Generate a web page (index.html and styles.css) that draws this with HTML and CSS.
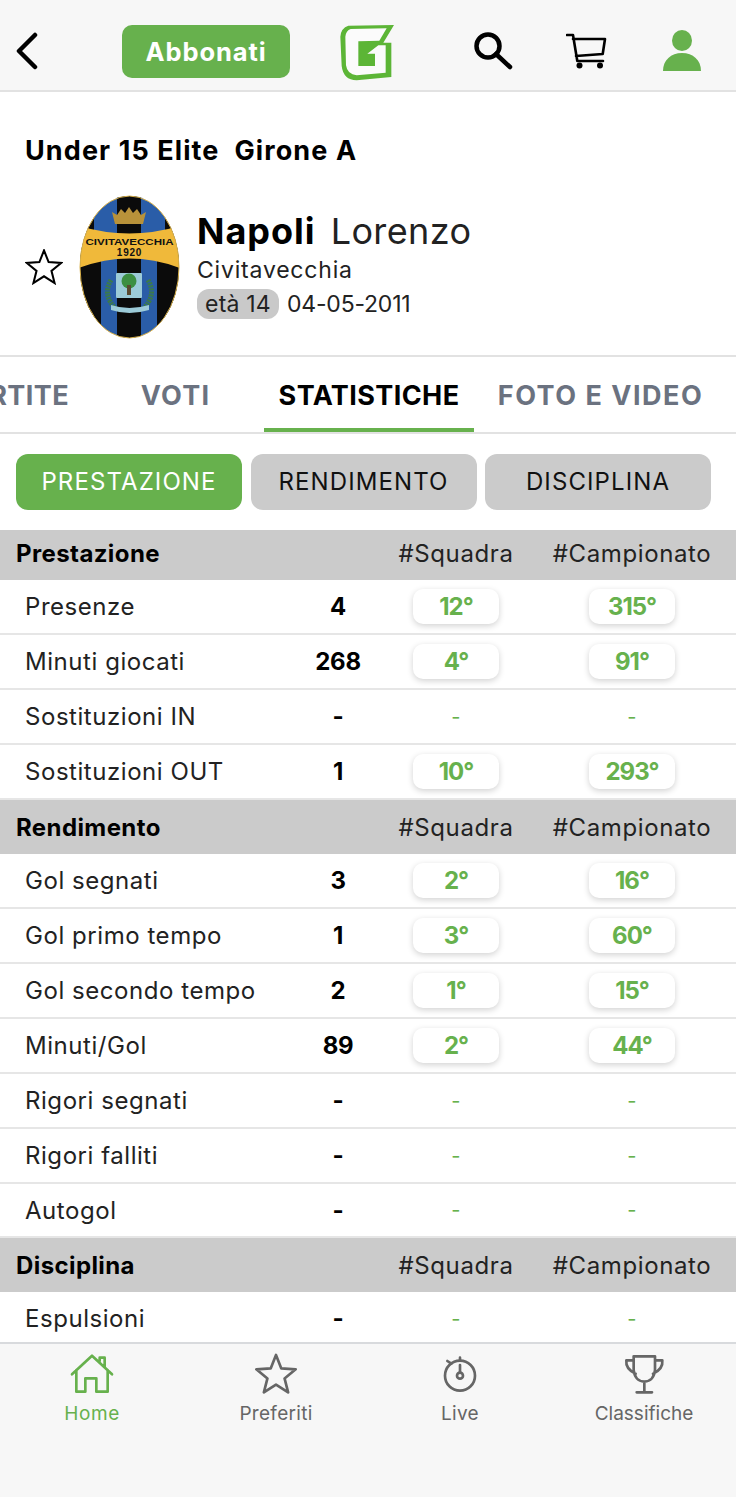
FILE: index.html
```html
<!DOCTYPE html>
<html lang="it">
<head>
<meta charset="utf-8">
<title>Napoli Lorenzo</title>
<link rel="stylesheet" href="styles.css">
</head>
<body>
<div class="app">
  <header class="topbar">
    <svg class="ic-back" viewBox="0 0 24 38"><path d="M20 3 L4 19 L20 35" /></svg>
    <a class="subscribe">Abbonati</a>
    <svg class="ic-logo" viewBox="0 0 225 210">
      <path class="logo-g" d="M55 29 L192 27 L160 80 L184 80 L184 183 L80 193 Q40 192 35 150 L31 62 Q33 36 55 29Z"/>
      <path class="logo-w" d="M62 39 L170 37 L148 74 L85 76 L85 150 L135 150 L135 113 L112 113 L145 88 L167 88 L167 170 L80 178 Q52 176 48 148 L46 62 Q48 44 62 39Z"/>
    </svg>
    <svg class="ic-search" viewBox="0 0 42 42"><circle cx="16" cy="16" r="11.500"/><path d="M24 24 L38 37"/></svg>
    <svg class="ic-cart" viewBox="106 12 41 36"><path d="M107 14 H113 L117.300 40 H143 M113 18 H145 L142.700 33 L116 35"/><circle cx="119.500" cy="44.500" r="3"/><circle cx="140" cy="44.500" r="3"/></svg>
    <svg class="ic-user" viewBox="0 0 40 42"><ellipse cx="20" cy="10.500" rx="10" ry="10.500"/><path d="M1 41 C1 30 9 23 20 23 C31 23 39 30 39 41Z"/></svg>
  </header>

  <main class="content">
    <h1 class="league"><span>Under 15 Elite</span><span>Girone A</span></h1>

    <section class="player">
      <svg class="ic-fav" viewBox="25 10 130 124"><path d="M90 15 L105.900 55.200 L149 58 L115.700 85.300 L126.400 127.200 L90 104 L53.600 127.200 L64.300 85.300 L31 58 L74.100 55.200Z"/></svg>
      <svg class="crest" viewBox="0 0 101 144">
        <defs><clipPath id="oval"><ellipse cx="50.500" cy="72" rx="49.500" ry="71"/></clipPath></defs>
        <g clip-path="url(#oval)">
          <rect class="c-blue" width="101" height="144"/>
          <rect class="c-black" x="38" width="24" height="144"/>
          <rect class="c-black" x="0" y="18" width="15" height="126"/>
          <rect class="c-black" x="86" y="18" width="15" height="126"/>
          <rect class="c-black" x="0" y="60" width="22" height="84"/>
          <rect class="c-black" x="78" y="60" width="23" height="84"/>
          <path class="c-yellow" d="M0 31 Q50 46 101 31 V73 Q50 54 0 73Z"/>
          <path class="c-gold" d="M33 17 L38 20 L42 14 L46 18 L50 12 L54 18 L58 14 L62 20 L67 17 L64 29 H36Z"/>
          <path class="c-leaf" d="M32 85 Q23 100 37 114 M69 85 Q78 100 64 114"/>
          <rect class="c-sky" x="37" y="78" width="26" height="25" rx="1"/>
          <circle class="c-tree" cx="50" cy="86" r="7.500"/>
          <rect class="c-trunk" x="48" y="90" width="4" height="10"/>
          <path class="c-sky" d="M32 110 Q50 116 70 110 L70 115 Q50 121 32 115Z"/>
          <text class="c-name" x="50.500" y="50" text-anchor="middle" textLength="88" lengthAdjust="spacingAndGlyphs">CIVITAVECCHIA</text>
          <text class="c-year" x="50.500" y="60.500" text-anchor="middle">1920</text>
        </g>
        <ellipse class="c-rim" cx="50.500" cy="72" rx="49.500" ry="71"/>
      </svg>
      <div class="player-info">
        <div class="player-name"><strong>Napoli</strong><span>Lorenzo</span></div>
        <div class="player-club">Civitavecchia</div>
        <div class="player-age"><span class="age-pill">età 14</span><span class="birth">04-05-2011</span></div>
      </div>
    </section>

    <nav class="tabs">
      <a class="tab tab-first">PARTITE</a>
      <a class="tab tab-voti">VOTI</a>
      <a class="tab tab-stat active">STATISTICHE</a>
      <a class="tab tab-foto">FOTO E VIDEO</a>
    </nav>

    <div class="segments">
      <a class="segment on">PRESTAZIONE</a>
      <a class="segment">RENDIMENTO</a>
      <a class="segment">DISCIPLINA</a>
    </div>

    <div class="stats">
      <div class="row head short"><b>Prestazione</b><i></i><span>#Squadra</span><span>#Campionato</span></div>
      <div class="row"><span>Presenze</span><b>4</b><em>12°</em><em>315°</em></div>
      <div class="row"><span>Minuti giocati</span><b>268</b><em>4°</em><em>91°</em></div>
      <div class="row"><span>Sostituzioni IN</span><b>-</b><u>-</u><u>-</u></div>
      <div class="row"><span>Sostituzioni OUT</span><b>1</b><em>10°</em><em>293°</em></div>
      <div class="row head"><b>Rendimento</b><i></i><span>#Squadra</span><span>#Campionato</span></div>
      <div class="row"><span>Gol segnati</span><b>3</b><em>2°</em><em>16°</em></div>
      <div class="row"><span>Gol primo tempo</span><b>1</b><em>3°</em><em>60°</em></div>
      <div class="row"><span>Gol secondo tempo</span><b>2</b><em>1°</em><em>15°</em></div>
      <div class="row"><span>Minuti/Gol</span><b>89</b><em>2°</em><em>44°</em></div>
      <div class="row"><span>Rigori segnati</span><b>-</b><u>-</u><u>-</u></div>
      <div class="row"><span>Rigori falliti</span><b>-</b><u>-</u><u>-</u></div>
      <div class="row tight"><span>Autogol</span><b>-</b><u>-</u><u>-</u></div>
      <div class="row head"><b>Disciplina</b><i></i><span>#Squadra</span><span>#Campionato</span></div>
      <div class="row last"><span>Espulsioni</span><b>-</b><u>-</u><u>-</u></div>
    </div>
  </main>

  <footer class="tabbar">
    <a class="nav current">
      <svg class="nav-ic" viewBox="5 15 180 132"><path d="M35 88 L95 32 L155 88 M48 75 V140 H75 V100 H108 V140 H142 V75 M118 48 V38 H133 V65"/></svg>
      <span>Home</span>
    </a>
    <a class="nav">
      <svg class="nav-ic" viewBox="0 0 180 132"><path d="M90 15 L105.900 55.200 L149 58 L115.700 85.300 L126.400 127.200 L90 104 L53.600 127.200 L64.300 85.300 L31 58 L74.100 55.200Z"/></svg>
      <span>Preferiti</span>
    </a>
    <a class="nav">
      <svg class="nav-ic" viewBox="-2 15 180 132"><circle cx="88" cy="92" r="45"/><circle cx="88" cy="92" r="9"/><path d="M88 60 V83 M88 47 V38 M62 56 L50 48"/></svg>
      <span>Live</span>
    </a>
    <a class="nav nav-long">
      <svg class="nav-ic" viewBox="552 15 180 132"><path d="M611 34 H675 V75 Q672 108 643 110 Q614 108 611 75Z M611 46 H589 Q586 72 617 86 M675 46 H697 Q700 72 669 86 M643 110 V141 M620 142 H666"/></svg>
      <span>Classifiche</span>
    </a>
  </footer>
</div>
</body>
</html>
```
FILE: styles.css
```css
* { box-sizing: border-box; }
html, body { margin: 0; padding: 0; background: #fff; }
body { font-family: Inter, "Open Sans", "Liberation Sans", sans-serif; color: #111; }
a { color: inherit; text-decoration: none; }
b, em, i, u { font-style: normal; text-decoration: none; }

.app { width: 736px; height: 1497px; display: flex; flex-direction: column; overflow: hidden; }

/* top bar */
.topbar { height: 92px; flex: none; display: flex; align-items: center; background: #f7f7f7; border-bottom: 2px solid #e2e2e2; padding: 12px 0 0 15px; }
.ic-back { width: 24px; height: 38px; fill: none; stroke: #000; stroke-width: 4.500; stroke-linecap: round; stroke-linejoin: round; }
.subscribe { width: 168px; height: 53px; margin-left: 83px; display: flex; align-items: center; justify-content: center; background: #67b14d; color: #fff; border-radius: 10px; font-size: 25.500px; font-weight: 700; letter-spacing: .9px; }
.ic-logo { width: 75px; height: 70px; margin-left: 40px; }
.logo-g { fill: #5cb536; }
.logo-w { fill: #fbfbfb; }
.ic-search { width: 42px; height: 42px; margin-left: 67px; fill: none; stroke: #000; stroke-width: 4.500; stroke-linecap: round; }
.ic-cart { width: 41px; height: 36px; margin-left: 52px; fill: none; stroke: #000; stroke-width: 2.600; stroke-linejoin: round; stroke-linecap: round; }
.ic-cart circle { fill: #000; stroke: none; }
.ic-user { width: 40px; height: 42px; margin-left: 55px; fill: #67b14d; }

.content { flex: 1; min-height: 0; overflow: hidden; }

.league { margin: 0; padding: 42px 0 0 25px; height: 103px; font-size: 27px; line-height: 33px; font-weight: 700; display: flex; gap: 15px; color: #000; letter-spacing: 1.100px; }

.player { height: 162px; padding-left: 25px; display: flex; align-items: flex-start; border-bottom: 2px solid #e2e2e2; }
.ic-fav { width: 38px; height: 36px; margin-top: 54px; fill: none; stroke: #000; stroke-width: 7; stroke-linejoin: miter; }
.crest { width: 101px; height: 144px; margin-left: 16px; flex: none; }
.c-blue { fill: #2a5da8; }
.c-black { fill: #0b0b0b; }
.c-yellow { fill: #f0b93a; }
.c-gold { fill: #b8923a; }
.c-leaf { fill: none; stroke: #3b7a4a; stroke-width: 5; stroke-dasharray: 2 1; }
.c-sky { fill: #9ccbd8; }
.c-tree { fill: #3c8f42; }
.c-trunk { fill: #5a4a30; }
.c-name { font-family: "Liberation Sans", sans-serif; font-size: 9.500px; font-weight: 700; fill: #111; }
.c-year { font-family: "Liberation Sans", sans-serif; font-size: 10px; font-weight: 700; fill: #111; letter-spacing: .8px; }
.c-rim { fill: none; stroke: #d8b04a; stroke-width: 1; }

.player-info { margin-left: 17px; padding-top: 14px; }
.player-name { font-size: 36px; line-height: 44px; display: flex; gap: 15px; color: #111; }
.player-name strong { font-weight: 700; color: #000; letter-spacing: 1px; }
.player-name span { font-weight: 400; color: #222; letter-spacing: .4px; }
.player-club { font-size: 23px; line-height: 28px; margin-top: 3px; color: #222; letter-spacing: .8px; }
.player-age { display: flex; align-items: center; gap: 8px; margin-top: 5px; font-size: 23px; color: #222; letter-spacing: .2px; }
.birth { letter-spacing: -.2px; }
.age-pill { width: 82px; height: 30px; background: #c9c9c9; border-radius: 12px; display: flex; align-items: center; justify-content: center; }

/* tabs */
.tabs { height: 77px; display: flex; border-bottom: 2px solid #e2e2e2; font-size: 27px; font-weight: 700; color: #6b7280; overflow: hidden; white-space: nowrap; letter-spacing: .4px; }
.tab { flex: none; height: 75px; display: flex; align-items: center; justify-content: center; padding-top: 1px; }
.tab-first { width: 130px; margin-left: -61px; justify-content: flex-end; }
.tab-voti { width: 69px; margin-left: 72px; letter-spacing: 1.200px; }
.tab-stat { width: 210px; margin-left: 54px; color: #000; border-bottom: 4px solid #67b14d; padding-top: 5px; }
.tab-foto { width: 205px; margin-left: 24px; letter-spacing: 1.500px; }

/* segments */
.segments { height: 96px; display: flex; gap: 8.500px; padding: 20px 0 0 16px; }
.segment { width: 226px; height: 56px; padding-bottom: 2px; display: flex; align-items: center; justify-content: center; border-radius: 12px; background: #cbcbcb; color: #111; font-size: 24px; letter-spacing: 1.100px; }
.segment.on { background: #67b14d; color: #fff; }

/* stats */
.stats { display: flex; flex-direction: column; }
.row { height: 55px; flex: none; display: grid; grid-template-columns: 283px 60px 176px 176px; align-items: center; padding-left: 25px; border-bottom: 2px solid #e6e6e6; font-size: 24px; color: #222; letter-spacing: .55px; }
.row > b { text-align: center; color: #000; font-weight: 700; letter-spacing: -.3px; white-space: nowrap; }
.row > span:first-child { white-space: nowrap; }
.row em { justify-self: center; width: 86px; height: 35px; display: flex; align-items: center; justify-content: center; border-radius: 10px; background: #fff; color: #67b14d; font-weight: 700; letter-spacing: -1px; box-shadow: 0 2px 6px rgba(0, 0, 0, .18); }
.row u { justify-self: center; color: #67b14d; font-size: 20px; }
.head { height: 54px; background: #cbcbcb; border-bottom: 0; padding-left: 16px; grid-template-columns: 292px 60px 176px 176px; color: #222; }
.head > b { text-align: left; letter-spacing: .4px; }
.head > span { justify-self: center; white-space: nowrap; letter-spacing: .6px; }
.short { height: 50px; padding-bottom: 4px; }
.tight { height: 54px; }
.last { height: 50px; padding-top: 3px; border-bottom: 0; }

/* bottom */
.tabbar { height: 155px; flex: none; display: grid; grid-template-columns: repeat(4, 184px); background: #f7f7f7; border-top: 2px solid #d8dadd; padding-top: 6px; }
.nav { display: flex; flex-direction: column; align-items: center; color: #666; font-size: 19px; letter-spacing: .3px; }
.nav-long { letter-spacing: 0; }
.nav-ic { width: 60px; height: 44px; fill: none; stroke: #666; stroke-width: 8; stroke-linejoin: round; stroke-linecap: round; }
.nav span { margin-top: 8px; line-height: 24px; }
.current { color: #67b14d; letter-spacing: .6px; }
.current .nav-ic { stroke: #67b14d; }
```
